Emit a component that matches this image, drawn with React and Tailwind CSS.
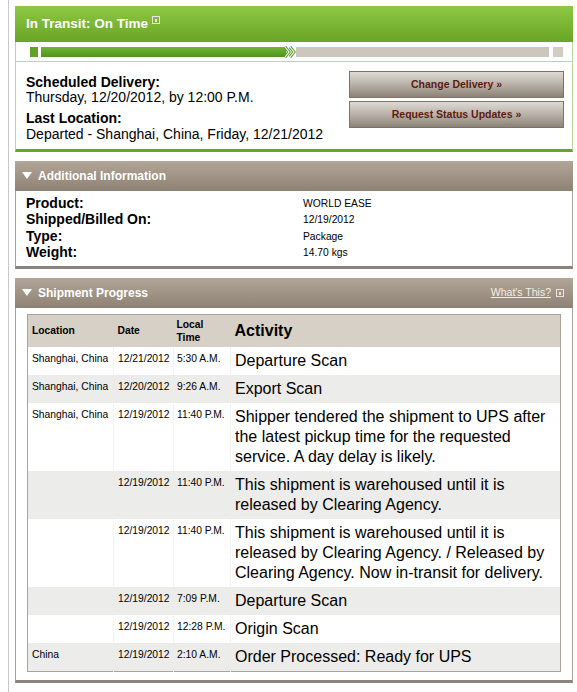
import React from 'react';

const rows = [
    { loc: 'Shanghai, China', date: '12/21/2012', time: '5:30 A.M.', act: 'Departure Scan' },
    { loc: 'Shanghai, China', date: '12/20/2012', time: '9:26 A.M.', act: 'Export Scan' },
    { loc: 'Shanghai, China', date: '12/19/2012', time: '11:40 P.M.', act: 'Shipper tendered the shipment to UPS after the latest pickup time for the requested service. A day delay is likely.' },
    { loc: '', date: '12/19/2012', time: '11:40 P.M.', act: 'This shipment is warehoused until it is released by Clearing Agency.' },
    { loc: '', date: '12/19/2012', time: '11:40 P.M.', act: 'This shipment is warehoused until it is released by Clearing Agency. / Released by Clearing Agency. Now in-transit for delivery.' },
    { loc: '', date: '12/19/2012', time: '7:09 P.M.', act: 'Departure Scan' },
    { loc: '', date: '12/19/2012', time: '12:28 P.M.', act: 'Origin Scan' },
    { loc: 'China', date: '12/19/2012', time: '2:10 A.M.', act: 'Order Processed: Ready for UPS' },
];

const info = [
    ['Product:', 'WORLD EASE'],
    ['Shipped/Billed On:', '12/19/2012'],
    ['Type:', 'Package'],
    ['Weight:', '14.70 kgs'],
];

function Triangle() {
    return (
        <svg width="10" height="8" viewBox="0 0 10 8" className="mr-[6px]">
            <polygon points="0,0 10,0 5,7" fill="#ffffff" />
        </svg>
    );
}

function InfoIcon({ className }) {
    return (
        <span className={`inline-flex items-center justify-center w-[8px] h-[8px] border border-[#e8e4dc] ${className}`}>
            <span className="w-[2px] h-[3px] bg-[#e8e4dc]" />
        </span>
    );
}

function SectionHeader({ title, right }) {
    return (
        <div className="h-[30px] flex items-center justify-between pl-[7px] pr-[9px] bg-linear-to-b from-[#b1a697] to-[#8d8273]">
            <div className="flex items-center text-white font-bold text-[12px]">
                <Triangle />
                {title}
            </div>
            {right}
        </div>
    );
}

function Button({ children }) {
    return (
        <div className="h-[27px] flex items-center justify-center border border-[#7d7368] bg-linear-to-b from-[#dedad4] via-[#b9b1a8] to-[#8c8277] text-[#5b1d10] font-bold text-[10.5px]">
            {children}
        </div>
    );
}

export default function App() {
    return (
        <div className="w-[577px] min-h-[692px] bg-white font-['Liberation_Sans',Arial,sans-serif] text-black">
            <div className="ml-[8px] border-l border-[#c9c9c9] min-h-[692px] pl-[6px] pt-[6px]">
                <div className="w-[558px]">
                    {/* status panel */}
                    <div className="h-[36px] flex items-center px-[11px] bg-linear-to-b from-[#8ec843] to-[#69a526] text-white font-bold text-[13.5px]">
                        In Transit: On Time
                        <InfoIcon className="ml-[4px] -mt-[8px]" />
                    </div>
                    <div className="h-[20px] flex items-center pl-[14px] pr-[9px] border-x border-b border-[#b9d99a]">
                        <div className="w-[8px] h-[10px] bg-[#5fa327]" />
                        <div className="w-[245px] h-[10px] ml-[3px] bg-linear-to-b from-[#72b534] to-[#4f9320]" />
                        <svg width="12" height="12" viewBox="0 0 12 12" className="-ml-[2px]">
                            <polyline points="1,1 5,6 1,11" fill="none" stroke="#4f9320" strokeWidth="3" />
                            <polyline points="6,1 10,6 6,11" fill="none" stroke="#4f9320" strokeWidth="3" />
                            <polyline points="1,1 5,6 1,11" fill="none" stroke="#ffffff" strokeWidth="1.2" />
                            <polyline points="6,1 10,6 6,11" fill="none" stroke="#ffffff" strokeWidth="1.2" />
                        </svg>
                        <div className="flex-1 h-[10px] bg-[#cdc6bc]" />
                        <div className="w-[10px] h-[10px] ml-[4px] bg-[#d2ccc3]" />
                    </div>
                    <div className="flex justify-between pl-[10px] pr-[8px] pt-[9px] pb-[7px] border-x border-[#b9d99a] border-b-[3px] border-b-[#69a526]">
                        <div className="mt-[3px]">
                            <div className="font-bold text-[14px] leading-[16px]">Scheduled Delivery:</div>
                            <div className="text-[14px] leading-[15px]">Thursday, 12/20/2012, by 12:00 P.M.</div>
                            <div className="font-bold text-[14px] leading-[16px] mt-[5px]">Last Location:</div>
                            <div className="text-[14px] leading-[16px]">Departed - Shanghai, China, Friday, 12/21/2012</div>
                        </div>
                        <div className="w-[215px] flex flex-col gap-[3px]">
                            <Button>Change Delivery »</Button>
                            <Button>Request Status Updates »</Button>
                        </div>
                    </div>

                    {/* additional information */}
                    <div className="mt-[9px]">
                        <SectionHeader title="Additional Information" />
                        <div className="pl-[10px] pt-[4px] pb-[5px] border-x border-[#aaa296] border-b-[3px] border-b-[#8a847c]">
                            {info.map(([label, value]) => (
                                <div key={label} className="flex items-center h-[16.5px]">
                                    <div className="w-[277px] font-bold text-[14px]">{label}</div>
                                    <div className="text-[10.3px]">{value}</div>
                                </div>
                            ))}
                        </div>
                    </div>

                    {/* shipment progress */}
                    <div className="mt-[9px]">
                        <SectionHeader
                            title="Shipment Progress"
                            right={
                                <div className="flex items-center text-[#f3efe8] text-[10.5px]">
                                    <span className="underline">What's This?</span>
                                    <InfoIcon className="ml-[5px]" />
                                </div>
                            }
                        />
                        <div className="px-[11px] pt-[6px] pb-[8px] border-x border-[#aaa296] border-b-[3px] border-b-[#8a847c]">
                            <table className="w-full border border-[#aaa398] border-collapse">
                                <thead>
                                    <tr className="bg-[#d6d0c6] h-[32px] text-left">
                                        <th className="w-[86px] pl-[4px] font-bold text-[10.3px]">Location</th>
                                        <th className="w-[60px] pl-[4px] font-bold text-[10.3px]">Date</th>
                                        <th className="w-[57px] pl-[3px] font-bold text-[10.3px] leading-[13px]">Local<br />Time</th>
                                        <th className="pl-[4px] font-bold text-[16px]">Activity</th>
                                    </tr>
                                </thead>
                                <tbody>
                                    {rows.map((r, i) => {
                                        const gray = i % 2 === 1;
                                        const sep = gray ? 'border-r border-[#ececea]' : 'border-r border-[#f3f3f3]';
                                        return (
                                            <tr key={i} className={gray ? 'bg-[#ececea]' : 'bg-white'}>
                                                <td className={`align-top pl-[4px] pt-[5px] text-[10.3px] leading-[14px] ${sep}`}>{r.loc}</td>
                                                <td className={`align-top pl-[4px] pt-[5px] text-[10.3px] leading-[14px] ${sep}`}>{r.date}</td>
                                                <td className={`align-top pl-[3px] pt-[5px] text-[10.3px] leading-[14px] ${sep}`}>{r.time}</td>
                                                <td className="align-top pl-[4px] pr-[6px] py-[4px] text-[16px] leading-[20px]">{r.act}</td>
                                            </tr>
                                        );
                                    })}
                                </tbody>
                            </table>
                        </div>
                    </div>
                </div>
            </div>
        </div>
    );
}
